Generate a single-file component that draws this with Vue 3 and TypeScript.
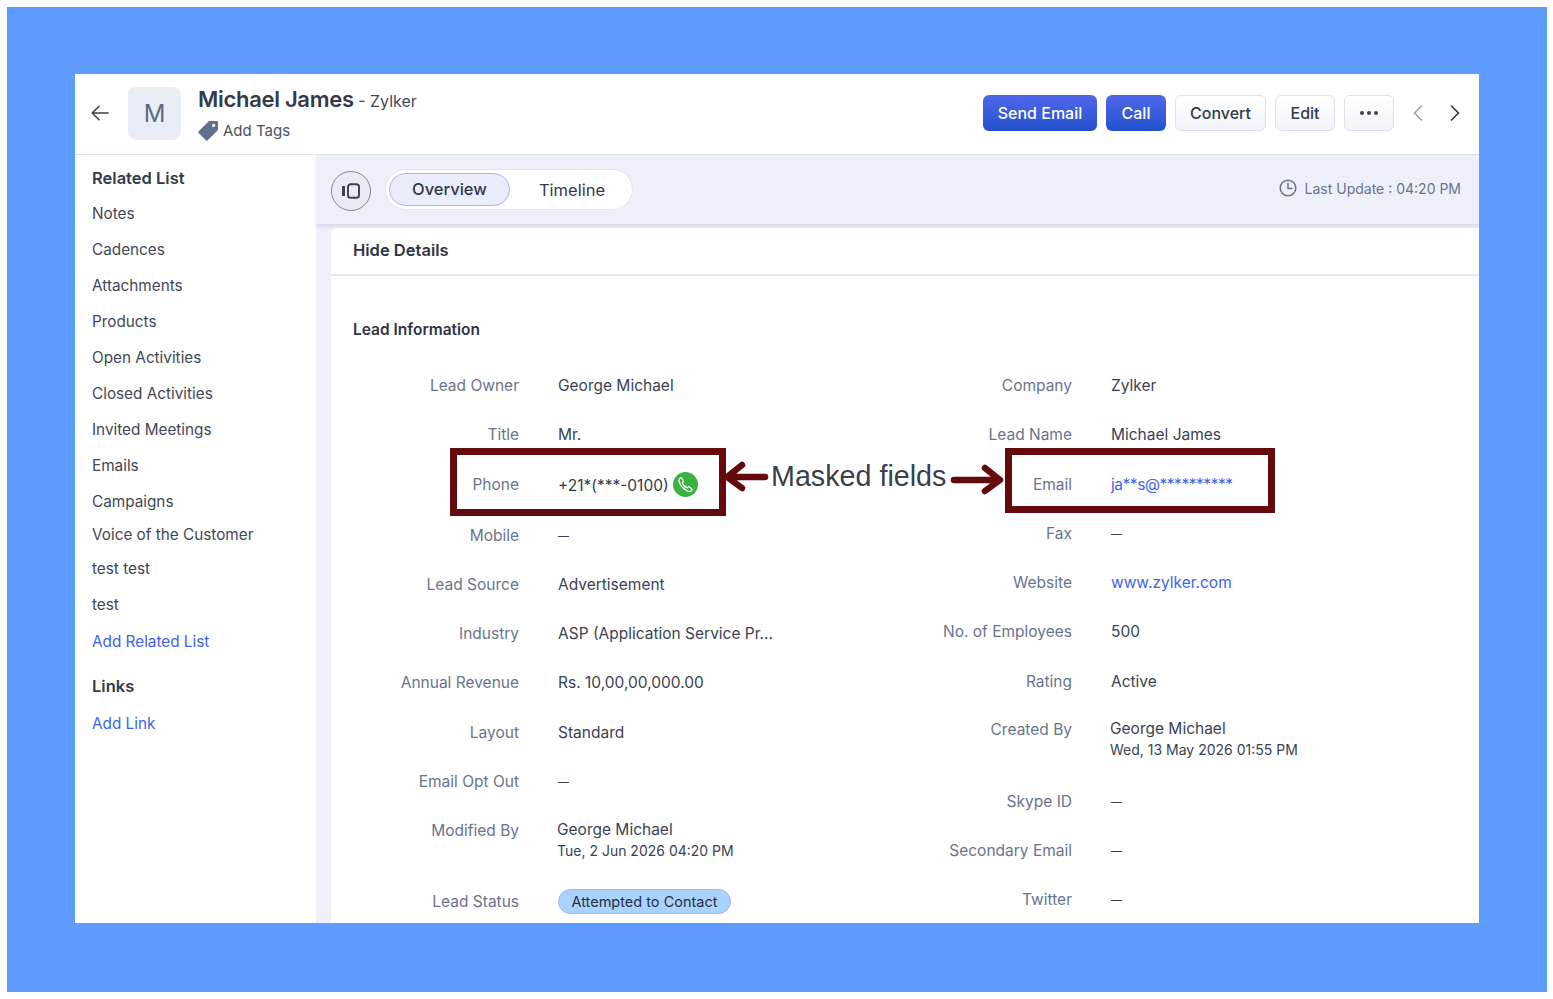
<template>
  <div class="page">
    <div class="frame">
      <div class="app">
        <header class="head">
          <svg class="back" width="18" height="16" viewBox="0 0 18 16" fill="none" stroke="#3b4252" stroke-width="1.6" stroke-linecap="round" stroke-linejoin="round">
            <path d="M17 8H1.5M8 1.2 1.2 8 8 14.8" />
          </svg>
          <div class="avatar">M</div>
          <div class="who">
            <div class="name"><b>Michael James</b><span> - Zylker</span></div>
            <div class="tags">
              <svg width="21" height="21" viewBox="0 0 21 21">
                <path d="M11 1h8a1 1 0 0 1 1 1v8L9.5 20.5a1 1 0 0 1-1.4 0L.6 13a1 1 0 0 1 0-1.4z" fill="#5f7190" />
                <circle cx="15.6" cy="5.4" r="1.6" fill="#fff" />
              </svg>
              Add Tags
            </div>
          </div>
          <div class="actions">
            <button class="btn primary send">Send Email</button>
            <button class="btn primary call">Call</button>
            <button class="btn convert">Convert</button>
            <button class="btn edit">Edit</button>
            <button class="btn more" aria-label="More">
              <svg width="18" height="4" viewBox="0 0 18 4" fill="#3b4252"><circle cx="2" cy="2" r="2" /><circle cx="9" cy="2" r="2" /><circle cx="16" cy="2" r="2" /></svg>
            </button>
            <svg class="prev" width="10" height="16" viewBox="0 0 10 16" fill="none" stroke="#9aa1b0" stroke-width="1.6" stroke-linecap="round" stroke-linejoin="round"><path d="M8.5 1 1.5 8l7 7" /></svg>
            <svg class="next" width="10" height="16" viewBox="0 0 10 16" fill="none" stroke="#2f3542" stroke-width="1.6" stroke-linecap="round" stroke-linejoin="round"><path d="M1.5 1l7 7-7 7" /></svg>
          </div>
        </header>

        <div class="body">
          <aside class="side">
            <h3 class="side-title">Related List</h3>
            <a v-for="item in relatedList" :key="item.text" class="side-item" :style="{ height: item.h + 'px' }">{{ item.text }}</a>
            <a class="side-item link add-related">Add Related List</a>
            <h3 class="side-title links">Links</h3>
            <a class="side-item link">Add Link</a>
          </aside>

          <main class="main">
            <div class="toolbar">
              <button class="round" aria-label="Toggle panel">
                <svg width="18" height="16" viewBox="0 0 18 16" fill="none" stroke="#3b4252">
                  <path d="M1.5 3v10" stroke-width="3" />
                  <rect x="6" y="1.2" width="11" height="13.6" rx="2.6" stroke-width="1.9" />
                </svg>
              </button>
              <div class="tabs">
                <div class="tab active">Overview</div>
                <div class="tab">Timeline</div>
              </div>
              <div class="update">
                <svg width="18" height="18" viewBox="0 0 18 18" fill="none" stroke="#69748c" stroke-width="1.5" stroke-linecap="round" stroke-linejoin="round">
                  <circle cx="9" cy="9" r="7.8" /><path d="M9 4.6V9.4h4" />
                </svg>
                Last Update : 04:20 PM
              </div>
            </div>

            <section class="card">
              <div class="card-head">Hide Details</div>
              <h4 class="section-title">Lead Information</h4>
              <div class="columns">
                <div v-for="(col, c) in columns" :key="c" class="col">
                  <div v-for="row in col" :key="row.label" class="row" :style="{ height: row.h + 'px' }">
                    <div class="label">{{ row.label }}</div>
                    <div v-if="row.kind === 'phone'" class="value phone">
                      {{ row.value }}
                      <svg width="25" height="25" viewBox="0 0 25 25">
                        <circle cx="12.5" cy="12.5" r="12.5" fill="#3bb143" />
                        <path d="M7.600 5.800c-1.500.9-2.100 2.200-1.500 4 1.500 4.300 4.800 7.900 9.100 9.500 1.700.6 3 .1 3.900-1.400.2-.3.100-.6-.1-.8l-2.800-2.300c-.3-.2-.6-.2-.8 0l-1.500 1.100c-2-1-3.600-2.700-4.700-4.800l1-1.500c.2-.3.200-.6 0-.8L8.500 5.900c-.3-.3-.6-.3-.9-.1z" fill="none" stroke="#fff" stroke-width="1.200" stroke-linejoin="round" />
                      </svg>
                    </div>
                    <div v-else-if="row.kind === 'stamp'" class="value stamp">
                      {{ row.value }}
                      <small>{{ row.sub }}</small>
                    </div>
                    <div v-else-if="row.kind === 'badge'" class="value"><span class="badge">{{ row.value }}</span></div>
                    <div v-else class="value" :class="row.kind">{{ row.value }}</div>
                  </div>
                </div>
              </div>
            </section>
          </main>
        </div>

        <div class="mask mask-phone"></div>
        <div class="mask mask-email"></div>
        <div class="callout">Masked fields</div>
        <svg class="arrows" width="290" height="40" viewBox="0 0 290 40" fill="none" stroke="#650a0c" stroke-width="6.500" stroke-linecap="round" stroke-linejoin="round">
          <path d="M43 18H6M20 6 5 18l15 11" />
          <path d="M232 21h45M263 9l15 12-15 11" />
        </svg>
      </div>
    </div>
  </div>
</template>

<script setup lang="ts">
interface Row {
  label: string
  value: string
  h: number
  kind?: 'phone' | 'stamp' | 'badge' | 'blue' | 'masked' | 'dash'
  sub?: string
}

const relatedList = [
  { text: 'Notes', h: 36 },
  { text: 'Cadences', h: 36 },
  { text: 'Attachments', h: 36 },
  { text: 'Products', h: 36 },
  { text: 'Open Activities', h: 36 },
  { text: 'Closed Activities', h: 36 },
  { text: 'Invited Meetings', h: 36 },
  { text: 'Emails', h: 36 },
  { text: 'Campaigns', h: 33 },
  { text: 'Voice of the Customer', h: 34 },
  { text: 'test test', h: 36 },
  { text: 'test', h: 37 },
]

const columns: Row[][] = [
  [
    { label: 'Lead Owner', value: 'George Michael', h: 49 },
    { label: 'Title', value: 'Mr.', h: 50 },
    { label: 'Phone', value: '+21*(***-0100)', h: 51, kind: 'phone' },
    { label: 'Mobile', value: '—', h: 49, kind: 'dash' },
    { label: 'Lead Source', value: 'Advertisement', h: 49 },
    { label: 'Industry', value: 'ASP (Application Service Pr...', h: 49 },
    { label: 'Annual Revenue', value: 'Rs. 10,00,00,000.00', h: 50 },
    { label: 'Layout', value: 'Standard', h: 49 },
    { label: 'Email Opt Out', value: '—', h: 49, kind: 'dash' },
    { label: 'Modified By', value: 'George Michael', sub: 'Tue, 2 Jun 2026 04:20 PM', h: 71, kind: 'stamp' },
    { label: 'Lead Status', value: 'Attempted to Contact', h: 40, kind: 'badge' },
  ],
  [
    { label: 'Company', value: 'Zylker', h: 49 },
    { label: 'Lead Name', value: 'Michael James', h: 50 },
    { label: 'Email', value: 'ja**s@**********', h: 49, kind: 'masked' },
    { label: 'Fax', value: '—', h: 49, kind: 'dash' },
    { label: 'Website', value: 'www.zylker.com', h: 49, kind: 'blue' },
    { label: 'No. of Employees', value: '500', h: 50 },
    { label: 'Rating', value: 'Active', h: 48 },
    { label: 'Created By', value: 'George Michael', sub: 'Wed, 13 May 2026 01:55 PM', h: 72, kind: 'stamp' },
    { label: 'Skype ID', value: '—', h: 49, kind: 'dash' },
    { label: 'Secondary Email', value: '—', h: 49, kind: 'dash' },
    { label: 'Twitter', value: '—', h: 40, kind: 'dash' },
  ],
]
</script>

<style>
html,
body {
  margin: 0;
  background: #fff;
}
</style>

<style scoped>
.page {
  width: 1553px;
  height: 999px;
  padding: 7px;
  box-sizing: border-box;
  font-family: Inter, "Liberation Sans", sans-serif;
  color: #3b4252;
  font-size: 16px;
}
.frame {
  width: 1540px;
  height: 985px;
  background: #5e9bff;
  padding: 67px 0 0 68px;
  box-sizing: border-box;
}
.app {
  position: relative;
  width: 1404px;
  height: 849px;
  background: #fff;
  overflow: hidden;
  display: flex;
  flex-direction: column;
}
.head {
  height: 81px;
  flex: none;
  display: flex;
  align-items: center;
  padding: 0 0 2px 16px;
  box-sizing: border-box;
  border-bottom: 1px solid #dfe3f0;
}
.back {
  margin-right: 19px;
}
.avatar {
  width: 53px;
  height: 53px;
  border-radius: 8px;
  background: #e9edf5;
  color: #5f6b80;
  font-size: 24px;
  display: flex;
  align-items: center;
  justify-content: center;
  margin-right: 17px;
}
.who {
  display: flex;
  flex-direction: column;
  gap: 5px;
  margin-top: -1px;
}
.name {
  line-height: 28px;
}
.name b {
  font-size: 22px;
  font-weight: 600;
  letter-spacing: -0.3px;
  color: #333a4a;
}
.name span {
  font-size: 16px;
  color: #3f4757;
}
.tags {
  display: flex;
  align-items: center;
  gap: 4px;
  font-size: 15px;
  color: #4a5263;
}
.actions {
  margin-left: auto;
  display: flex;
  align-items: center;
  gap: 9px;
}
.btn {
  height: 36px;
  box-sizing: border-box;
  border: 1px solid #dde1ec;
  border-radius: 6px;
  background: linear-gradient(#fff, #f1f3f8);
  color: #333a4a;
  font-family: inherit;
  font-size: 16px;
  font-weight: 500;
  padding: 0;
  display: flex;
  align-items: center;
  justify-content: center;
}
.primary {
  border: 0;
  color: #fff;
  background: linear-gradient(#5267ec, #2252cd);
}
.send { width: 114px; }
.call { width: 60px; }
.convert { width: 91px; }
.edit { width: 60px; }
.more { width: 50px; }
.prev {
  margin-left: 10px;
}
.next {
  margin: 0 19px 0 18px;
}
.body {
  flex: 1;
  display: flex;
  min-height: 0;
}
.side {
  width: 241px;
  flex: none;
  box-sizing: border-box;
  padding: 12px 0 0 17px;
  display: flex;
  flex-direction: column;
}
.side-title {
  margin: 0;
  height: 36px;
  line-height: 22px;
  font-size: 16.5px;
  font-weight: 600;
  color: #333a4a;
}
.side-item {
  display: block;
  height: 36px;
  line-height: 22px;
  font-size: 15.3px;
  color: #3f4757;
  flex: none;
}
.link {
  color: #3c63f0;
}
.add-related {
  height: 44px;
}
.links {
  height: 38px;
}
.main {
  flex: 1;
  min-width: 0;
  background: #edf0f9;
  display: flex;
  flex-direction: column;
}
.toolbar {
  height: 69px;
  flex: none;
  display: flex;
  align-items: center;
  padding: 0 18px 0 15px;
  box-shadow: 0 3px 4px rgba(120, 130, 160, 0.18);
}
.round {
  width: 40px;
  height: 40px;
  padding: 0;
  border-radius: 50%;
  border: 1px solid #7f8797;
  background: #e9ecf3;
  display: flex;
  align-items: center;
  justify-content: center;
  margin-right: 14px;
  margin-top: 2px;
}
.tabs {
  width: 248px;
  height: 41px;
  box-sizing: border-box;
  border-radius: 21px;
  background: #fff;
  border: 1px solid #e3e6f1;
  padding: 3px;
  display: flex;
  align-items: center;
  font-size: 16.5px;
  color: #333a4a;
}
.tab {
  flex: 1;
  text-align: center;
  margin-left: 5px;
}
.tab.active {
  flex: none;
  width: 121px;
  height: 33px;
  line-height: 31px;
  box-sizing: border-box;
  margin-left: 0;
  border-radius: 17px;
  border: 1px solid #a8b6e8;
  background: #e9ecfb;
  font-weight: 500;
}
.update {
  margin-left: auto;
  margin-top: -3px;
  display: flex;
  align-items: center;
  gap: 8px;
  font-size: 14px;
  color: #69748c;
}
.card {
  flex: 1;
  margin: 4px 0 0 15px;
  background: #fff;
  border-top-left-radius: 6px;
  overflow: hidden;
}
.card-head {
  height: 48px;
  box-sizing: border-box;
  padding: 11px 0 0 22px;
  line-height: 22px;
  font-size: 16.5px;
  font-weight: 600;
  color: #2f3542;
  border-bottom: 2px solid #e6e8f0;
}
.section-title {
  margin: 43px 0 0 22px;
  height: 22px;
  line-height: 22px;
  font-size: 15.5px;
  font-weight: 600;
  color: #2f3542;
}
.columns {
  display: flex;
  margin-top: 34px;
}
.col {
  width: 553px;
  flex: none;
}
.row {
  display: flex;
  gap: 39px;
}
.label {
  width: 188px;
  flex: none;
  text-align: right;
  line-height: 22px;
  font-size: 15.5px;
  color: #69748c;
  white-space: nowrap;
}
.value {
  line-height: 22px;
  font-size: 15.5px;
  color: #3b4252;
  white-space: nowrap;
}
.blue {
  color: #3c63f0;
}
.masked {
  color: #3c63f0;
  letter-spacing: -0.45px;
}
.dash {
  font-size: 11px;
}
.phone {
  display: flex;
  align-items: center;
  gap: 4px;
  color: #333a4a;
  height: 22px;
  margin-top: 1px;
}
.phone svg {
  margin-top: -3px;
}
.stamp {
  margin-left: -1px;
  margin-top: -1px;
}
.stamp small {
  display: block;
  font-size: 14px;
  line-height: 20px;
}
.badge {
  display: inline-block;
  height: 25px;
  line-height: 23px;
  box-sizing: border-box;
  padding: 0 12.5px;
  border-radius: 13px;
  border: 1px solid #a4b7e8;
  background: #a9d2ff;
  font-size: 14.5px;
  color: #2a2f3b;
  vertical-align: top;
  margin-top: -2px;
}
.mask {
  position: absolute;
  box-sizing: border-box;
  border: 7px solid #650a0c;
}
.mask-phone {
  left: 375px;
  top: 374px;
  width: 276px;
  height: 68px;
}
.mask-email {
  left: 930px;
  top: 374px;
  width: 270px;
  height: 65px;
}
.callout {
  position: absolute;
  left: 696px;
  top: 383px;
  font-family: "Liberation Sans", sans-serif;
  font-size: 28.7px;
  line-height: 38px;
  color: #3a3f4a;
  white-space: nowrap;
}
.arrows {
  position: absolute;
  left: 647px;
  top: 385px;
}
</style>
